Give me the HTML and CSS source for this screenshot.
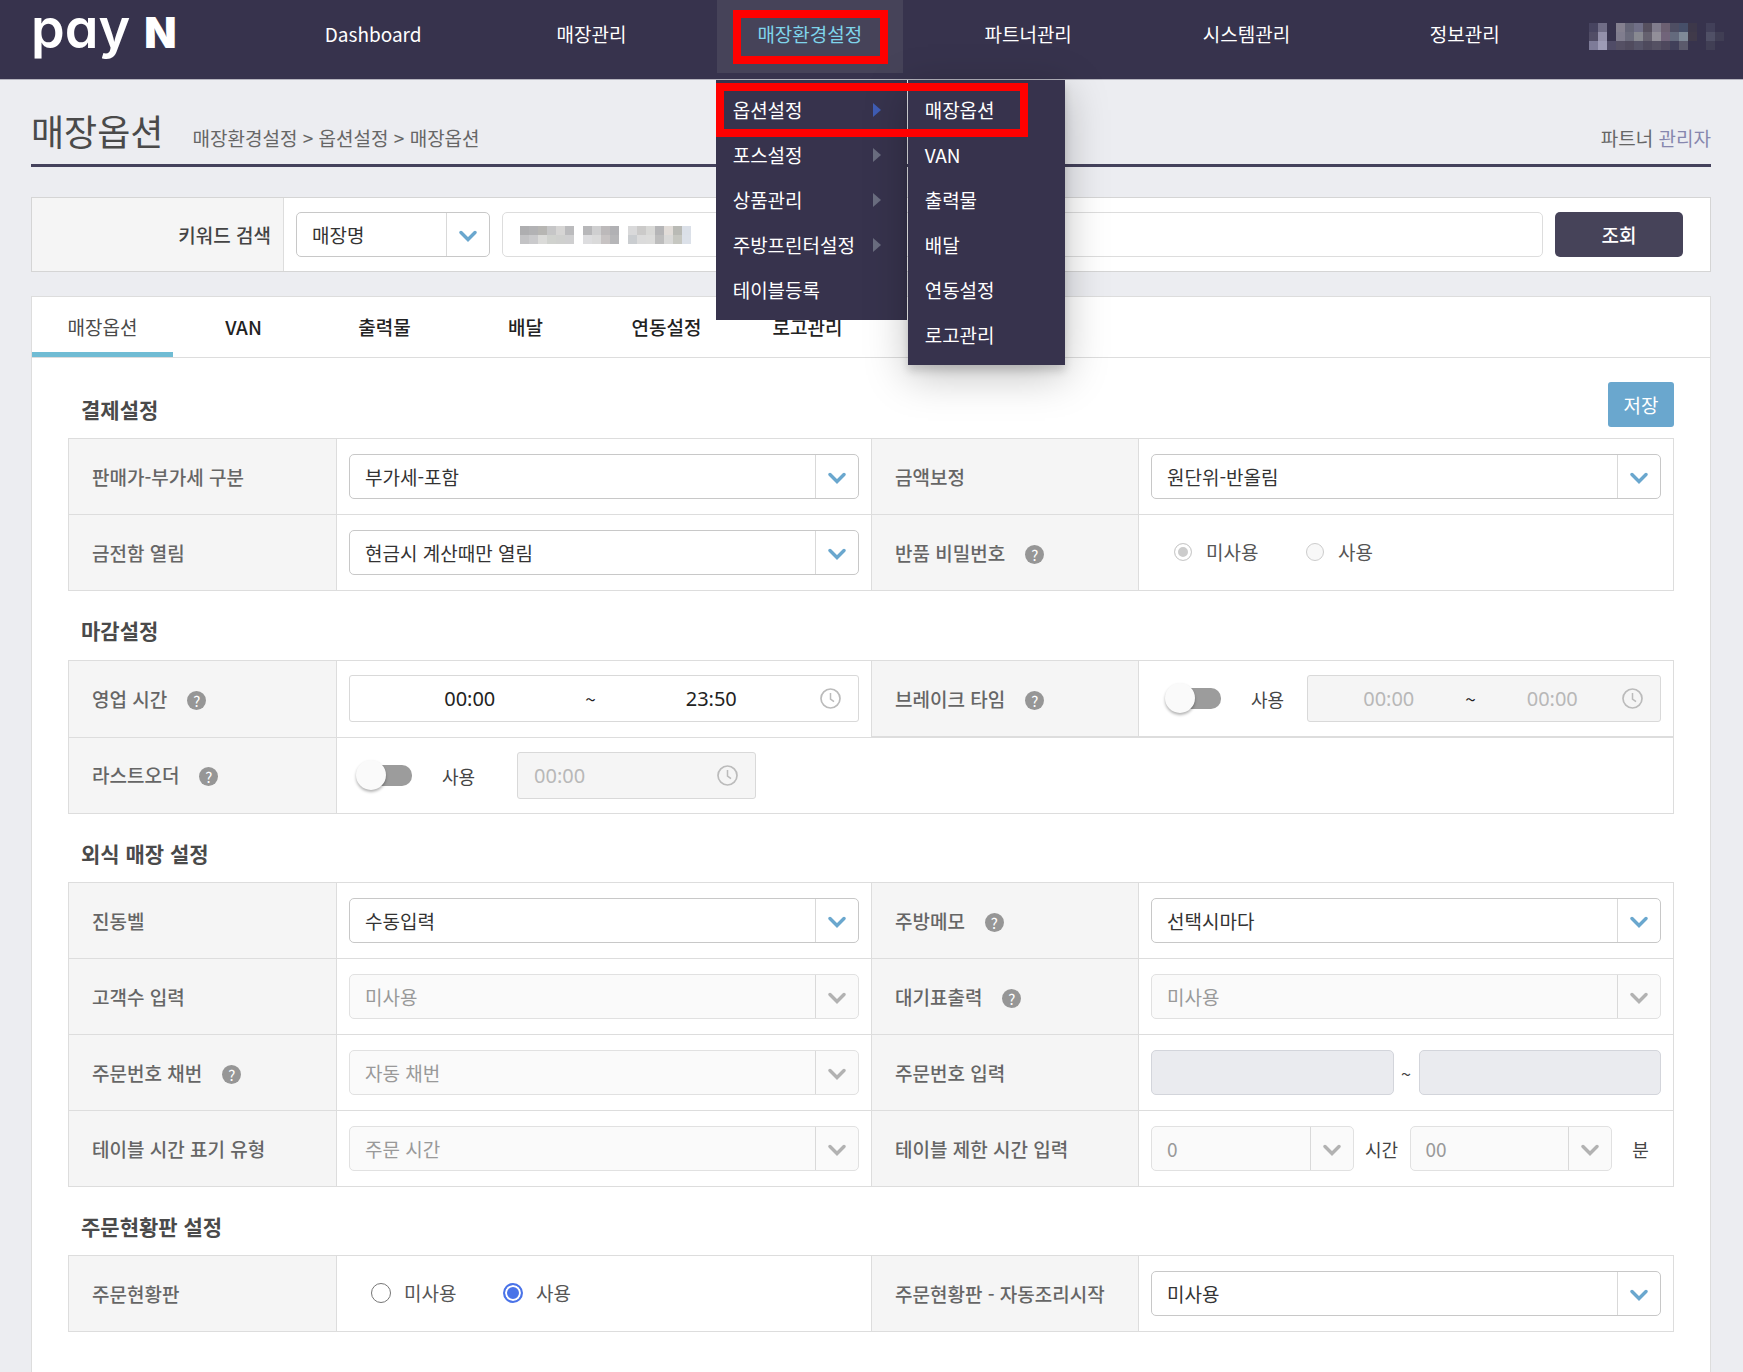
FILE: index.html
```html
<!DOCTYPE html>
<html lang="ko">
<head>
<meta charset="utf-8">
<meta name="viewport" content="width=device-width, initial-scale=1">
<title>매장옵션 - payN</title>
<link rel="stylesheet" href="styles.css">
</head>
<body>
<svg class="sprite" aria-hidden="true">
  <symbol id="chevron" viewBox="0 0 18 12"><path d="M2 2.5 9 9.5 16 2.5" fill="none" stroke="currentColor" stroke-width="3.4" stroke-linecap="round" stroke-linejoin="miter"/></symbol>
  <symbol id="clock" viewBox="0 0 21 21"><circle cx="10.500" cy="10.500" r="9.500" fill="none" stroke="currentColor" stroke-width="1.700"/><path d="M10.500 5v6l3.500 2.600" fill="none" stroke="currentColor" stroke-width="1.500"/></symbol>
</svg>

<header class="topbar">
  <a class="logo" href="#" aria-label="pay N"><span class="logo-pay">pay</span><span class="logo-n">N</span></a>
  <nav class="nav">
    <div class="nav-item"><a class="nav-link" href="#">Dashboard</a></div>
    <div class="nav-item"><a class="nav-link" href="#">매장관리</a></div>
    <div class="nav-item">
      <a class="nav-link active" href="#">매장환경설정</a>
      <span class="mark mark-nav"></span>
      <div class="menus">
        <ul class="menu menu-main">
          <li><a href="#">옵션설정<i class="arrow on"></i></a></li>
          <li><a href="#">포스설정<i class="arrow"></i></a></li>
          <li><a href="#">상품관리<i class="arrow"></i></a></li>
          <li><a href="#">주방프린터설정<i class="arrow"></i></a></li>
          <li><a href="#">테이블등록</a></li>
        </ul>
        <ul class="menu menu-sub">
          <li><a href="#">매장옵션</a></li>
          <li><a href="#">VAN</a></li>
          <li><a href="#">출력물</a></li>
          <li><a href="#">배달</a></li>
          <li><a href="#">연동설정</a></li>
          <li><a href="#">로고관리</a></li>
        </ul>
        <span class="mark mark-menu"></span>
      </div>
    </div>
    <div class="nav-item"><a class="nav-link" href="#">파트너관리</a></div>
    <div class="nav-item"><a class="nav-link" href="#">시스템관리</a></div>
    <div class="nav-item"><a class="nav-link" href="#">정보관리</a></div>
  </nav>
  <div class="user">
    <svg width="135" height="27" viewBox="0 0 15 3" shape-rendering="crispEdges" aria-hidden="true">
      <g><rect x="0" width="1" height="1" fill="#474460"/><rect x="1" width="1" height="1" fill="#706d86"/><rect x="3" width="1" height="1" fill="#84808f"/><rect x="4" width="1" height="1" fill="#656577"/><rect x="5" width="1" height="1" fill="#706f87"/><rect x="6" width="1" height="1" fill="#56505f"/><rect x="7" width="1" height="1" fill="#817d8d"/><rect x="8" width="1" height="1" fill="#6c6072"/><rect x="9" width="1" height="1" fill="#4e4e63"/><rect x="10" width="1" height="1" fill="#464f69"/><rect x="11" width="1" height="1" fill="#3d384a"/><rect x="13" width="1" height="1" fill="#424059"/></g>
      <g><rect x="0" y="1" width="1" height="1" fill="#514d66"/><rect x="1" y="1" width="1" height="1" fill="#9390aa"/><rect x="3" y="1" width="1" height="1" fill="#807d8e"/><rect x="4" y="1" width="1" height="1" fill="#6b6b7c"/><rect x="5" y="1" width="1" height="1" fill="#888991"/><rect x="6" y="1" width="1" height="1" fill="#65616f"/><rect x="7" y="1" width="1" height="1" fill="#928f99"/><rect x="8" y="1" width="1" height="1" fill="#71647a"/><rect x="9" y="1" width="1" height="1" fill="#646a7d"/><rect x="10" y="1" width="1" height="1" fill="#7f8a98"/><rect x="11" y="1" width="1" height="1" fill="#403a4a"/><rect x="13" y="1" width="1" height="1" fill="#505066"/><rect x="14" y="1" width="1" height="1" fill="#403e54"/></g>
      <g><rect x="0" y="2" width="1" height="1" fill="#7d7b98"/><rect x="1" y="2" width="1" height="1" fill="#9d9bb6"/><rect x="2" y="2" width="1" height="1" fill="#504c67"/><rect x="3" y="2" width="1" height="1" fill="#555064"/><rect x="4" y="2" width="1" height="1" fill="#504b5e"/><rect x="5" y="2" width="1" height="1" fill="#565468"/><rect x="6" y="2" width="1" height="1" fill="#4e4a5d"/><rect x="7" y="2" width="1" height="1" fill="#555163"/><rect x="8" y="2" width="1" height="1" fill="#4e485d"/><rect x="9" y="2" width="1" height="1" fill="#41405a"/><rect x="10" y="2" width="1" height="1" fill="#5b5a6c"/><rect x="13" y="2" width="1" height="1" fill="#413f55"/></g>
    </svg>
  </div>
</header>

<main class="page">
  <div class="page-head">
    <h1>매장옵션</h1>
    <p class="crumbs">매장환경설정 &gt; 옵션설정 &gt; 매장옵션</p>
    <p class="role">파트너 <a href="#">관리자</a></p>
  </div>

  <form class="search">
    <label class="search-label" for="keyword-type">키워드 검색</label>
    <div class="search-body">
      <span class="select search-type"><select id="keyword-type"><option>매장명</option></select><svg><use href="#chevron"/></svg></span>
      <span class="keyword">
        <input type="text" aria-label="검색어">
        <svg width="171" height="18" viewBox="0 0 19 2" shape-rendering="crispEdges" aria-hidden="true">
          <g><rect x="0" width="1" height="1" fill="#aeaeb0"/><rect x="1" width="1" height="1" fill="#b2b2b4"/><rect x="2" width="1" height="1" fill="#b7b6b3"/><rect x="3" width="1" height="1" fill="#c6c6c7"/><rect x="4" width="1" height="1" fill="#d6d5d4"/><rect x="5" width="1" height="1" fill="#bbbbbd"/><rect x="7" width="1" height="1" fill="#b7b7b9"/><rect x="8" width="1" height="1" fill="#cfcfd0"/><rect x="9" width="1" height="1" fill="#bcb9ba"/><rect x="10" width="1" height="1" fill="#b1b1b4"/><rect x="12" width="1" height="1" fill="#d9d9da"/><rect x="13" width="1" height="1" fill="#cbcac9"/><rect x="14" width="1" height="1" fill="#d8d8d6"/><rect x="15" width="1" height="1" fill="#b5b5b7"/><rect x="16" width="1" height="1" fill="#e1dcd8"/><rect x="17" width="1" height="1" fill="#b9bab5"/><rect x="18" width="1" height="1" fill="#dbe0e8"/></g>
          <g><rect x="0" y="1" width="1" height="1" fill="#c3c3c5"/><rect x="1" y="1" width="1" height="1" fill="#cacacc"/><rect x="2" y="1" width="1" height="1" fill="#dbdbd9"/><rect x="3" y="1" width="1" height="1" fill="#d0d2ce"/><rect x="4" y="1" width="1" height="1" fill="#cfd0ce"/><rect x="5" y="1" width="1" height="1" fill="#cfcfd0"/><rect x="7" y="1" width="1" height="1" fill="#dddddf"/><rect x="8" y="1" width="1" height="1" fill="#dadada"/><rect x="9" y="1" width="1" height="1" fill="#c7c3c3"/><rect x="10" y="1" width="1" height="1" fill="#b6b6b8"/><rect x="12" y="1" width="1" height="1" fill="#cacdd0"/><rect x="13" y="1" width="1" height="1" fill="#dbdbdb"/><rect x="14" y="1" width="1" height="1" fill="#dcdcdb"/><rect x="15" y="1" width="1" height="1" fill="#bdbdbd"/><rect x="16" y="1" width="1" height="1" fill="#d9d9d8"/><rect x="17" y="1" width="1" height="1" fill="#c6c7c1"/><rect x="18" y="1" width="1" height="1" fill="#dce1e9"/></g>
        </svg>
      </span>
      <button class="btn-search" type="button">조회</button>
    </div>
  </form>

  <section class="panel">
    <div class="tabs">
      <a class="tab current" href="#">매장옵션</a>
      <a class="tab" href="#">VAN</a>
      <a class="tab" href="#">출력물</a>
      <a class="tab" href="#">배달</a>
      <a class="tab" href="#">연동설정</a>
      <a class="tab" href="#">로고관리</a>
    </div>
    <form class="panel-body">
      <div class="section-head first"><h2>결제설정</h2><button class="btn-save" type="button">저장</button></div>
      <table class="grid">
        <colgroup><col class="c-label"><col class="c-field"><col class="c-label2"><col class="c-field"></colgroup>
        <tr>
          <th><label for="vat">판매가-부가세 구분</label></th>
          <td><span class="select"><select id="vat"><option>부가세-포함</option></select><svg><use href="#chevron"/></svg></span></td>
          <th><label for="round">금액보정</label></th>
          <td><span class="select"><select id="round"><option>원단위-반올림</option></select><svg><use href="#chevron"/></svg></span></td>
        </tr>
        <tr>
          <th><label for="drawer">금전함 열림</label></th>
          <td><span class="select"><select id="drawer"><option>현금시 계산때만 열림</option></select><svg><use href="#chevron"/></svg></span></td>
          <th>반품 비밀번호<span class="help">?</span></th>
          <td>
            <div class="radios">
              <label><input type="radio" name="refund" checked disabled>미사용</label>
              <label><input type="radio" name="refund" disabled>사용</label>
            </div>
          </td>
        </tr>
      </table>

      <div class="section-head"><h2>마감설정</h2></div>
      <table class="grid tall">
        <colgroup><col class="c-label"><col class="c-field"><col class="c-label2"><col class="c-field"></colgroup>
        <tr>
          <th><label for="open-from">영업 시간</label><span class="help">?</span></th>
          <td><div class="range"><input id="open-from" type="text" value="00:00"><span>~</span><input type="text" value="23:50" aria-label="영업 종료"><svg><use href="#clock"/></svg></div></td>
          <th class="thick">브레이크 타임<span class="help">?</span></th>
          <td class="thick">
            <div class="row">
              <label class="switch"><input type="checkbox"><i></i>사용</label>
              <div class="range off"><input type="text" value="00:00" aria-label="브레이크 시작" disabled><span>~</span><input type="text" value="00:00" aria-label="브레이크 종료" disabled><svg><use href="#clock"/></svg></div>
            </div>
          </td>
        </tr>
        <tr>
          <th>라스트오더<span class="help">?</span></th>
          <td colspan="3">
            <div class="row">
              <label class="switch wide"><input type="checkbox"><i></i>사용</label>
              <div class="range single off"><input type="text" value="00:00" aria-label="라스트오더 시간" disabled><svg><use href="#clock"/></svg></div>
            </div>
          </td>
        </tr>
      </table>

      <div class="section-head"><h2>외식 매장 설정</h2></div>
      <table class="grid">
        <colgroup><col class="c-label"><col class="c-field"><col class="c-label2"><col class="c-field"></colgroup>
        <tr>
          <th><label for="bell">진동벨</label></th>
          <td><span class="select"><select id="bell"><option>수동입력</option></select><svg><use href="#chevron"/></svg></span></td>
          <th><label for="memo">주방메모</label><span class="help">?</span></th>
          <td><span class="select"><select id="memo"><option>선택시마다</option></select><svg><use href="#chevron"/></svg></span></td>
        </tr>
        <tr>
          <th><label for="guests">고객수 입력</label></th>
          <td><span class="select off"><select id="guests" disabled><option>미사용</option></select><svg><use href="#chevron"/></svg></span></td>
          <th><label for="ticket">대기표출력</label><span class="help">?</span></th>
          <td><span class="select off"><select id="ticket" disabled><option>미사용</option></select><svg><use href="#chevron"/></svg></span></td>
        </tr>
        <tr>
          <th><label for="numbering">주문번호 채번</label><span class="help">?</span></th>
          <td><span class="select off"><select id="numbering" disabled><option>자동 채번</option></select><svg><use href="#chevron"/></svg></span></td>
          <th><label for="no-from">주문번호 입력</label></th>
          <td><div class="row numbers"><input id="no-from" type="text" disabled><span>~</span><input type="text" aria-label="주문번호 끝" disabled></div></td>
        </tr>
        <tr>
          <th><label for="time-type">테이블 시간 표기 유형</label></th>
          <td><span class="select off"><select id="time-type" disabled><option>주문 시간</option></select><svg><use href="#chevron"/></svg></span></td>
          <th><label for="limit-h">테이블 제한 시간 입력</label></th>
          <td>
            <div class="row limits">
              <span class="select off"><select id="limit-h" disabled><option>0</option></select><svg><use href="#chevron"/></svg></span>
              <span class="unit">시간</span>
              <span class="select off"><select aria-label="분" disabled><option>00</option></select><svg><use href="#chevron"/></svg></span>
              <span class="unit last">분</span>
            </div>
          </td>
        </tr>
      </table>

      <div class="section-head"><h2>주문현황판 설정</h2></div>
      <table class="grid">
        <colgroup><col class="c-label"><col class="c-field"><col class="c-label2"><col class="c-field"></colgroup>
        <tr>
          <th>주문현황판</th>
          <td>
            <div class="radios">
              <label><input type="radio" name="board">미사용</label>
              <label><input type="radio" name="board" checked>사용</label>
            </div>
          </td>
          <th><label for="auto">주문현황판 - 자동조리시작</label></th>
          <td><span class="select"><select id="auto"><option>미사용</option></select><svg><use href="#chevron"/></svg></span></td>
        </tr>
      </table>
    </form>
  </section>
</main>
</body>
</html>
```
FILE: styles.css
```css
* { box-sizing: border-box; }

body {
  margin: 0;
  min-height: 100vh;
  display: flex;
  flex-direction: column;
  background: #ecedf1;
  color: #444;
  font: 19px/28px "Noto Sans CJK KR", "Noto Sans CJK JP", sans-serif;
}

a { color: inherit; text-decoration: none; }
h1, h2, p, ul { margin: 0; padding: 0; }
ul { list-style: none; }
input, select, button { font: inherit; color: inherit; margin: 0; min-width: 0; }
.sprite { position: absolute; width: 0; height: 0; }

/* Top bar */
.topbar {
  display: flex;
  height: 80px;
  background: #37334d;
  border-bottom: 1px solid #b5b4be;
  color: #fff;
}
.logo {
  flex: 0 0 264px;
  display: flex;
  align-items: baseline;
  gap: 14px;
  padding-left: 31px;
  font-family: Inter, sans-serif;
  line-height: 58px;
}
.logo-pay { font-size: 54px; font-weight: 600; font-feature-settings: "cv11"; }
.logo-n { font-size: 42px; font-weight: 900; }
.nav { flex: 1; display: grid; grid-template-columns: repeat(6, 1fr); }
.nav-item { position: relative; padding: 0 16px; }
.nav-link { display: block; height: 73px; line-height: 68px; text-align: center; }
.nav-link.active { background: #464359; color: #7fd4ea; }
.user { flex: 0 0 169px; padding: 23px 0 0 15px; }
.user svg { display: block; }

.mark { position: absolute; border: 8px solid #f00; pointer-events: none; }
.mark-nav { left: 32px; right: 31px; top: 10px; height: 54px; }
.mark-menu { left: 0; top: 3px; width: 312px; height: 54px; }

.menus {
  position: absolute;
  top: 80px;
  left: 15px;
  z-index: 5;
  display: flex;
  align-items: flex-start;
  gap: 1px;
  width: 349px;
}
.menu { background: #37334d; padding: 7px 0 8px; }
.menu-main { flex: 0 0 191px; }
.menu-sub { flex: 1; box-shadow: 0 6px 8px rgba(0, 0, 0, .15), 0 10px 40px rgba(0, 0, 0, .25); }
.menu a {
  display: flex;
  align-items: center;
  justify-content: space-between;
  height: 45px;
  padding: 0 26px 0 17px;
}
.arrow {
  border-left: 8px solid #6b6e80;
  border-top: 7px solid transparent;
  border-bottom: 7px solid transparent;
}
.arrow.on { border-left-color: #3f5db4; }

/* Page head */
.page { flex: 1; display: flex; flex-direction: column; padding: 0 32px 0 31px; }
.page-head {
  display: flex;
  align-items: baseline;
  height: 87px;
  padding-top: 25px;
  border-bottom: 3px solid #44425c;
  color: #666;
}
h1 { font-size: 36px; line-height: 50px; font-weight: 400; color: #4a4a4a; margin-right: 29px; }
.role { margin-left: auto; }
.role a { color: #8787ae; }

/* Search */
.search { display: flex; margin-top: 30px; border: 1px solid #d5d5d5; background: #fff; }
.search-label {
  flex: 0 0 252px;
  display: flex;
  align-items: center;
  justify-content: flex-end;
  padding-right: 12px;
  background: #f5f5f5;
  border-right: 1px solid #ddd;
  font-weight: 500;
}
.search-body { flex: 1; display: flex; gap: 12px; padding: 14px 27px 14px 12px; }
.search-type { flex: 0 0 194px; }
.keyword { flex: 1; position: relative; display: flex; }
.keyword input { width: 100%; height: 45px; border: 1px solid #ddd; border-radius: 5px; padding: 0 15px; background: #fff; }
.keyword svg { position: absolute; left: 18px; top: 14px; }
button { border: 0; color: #fff; cursor: pointer; height: 45px; padding: 0; }
.btn-search { flex: 0 0 128px; background: #464359; border-radius: 5px; font-weight: 500; }
.btn-save { width: 66px; background: #6aa7ce; border-radius: 3px; }

/* Selects */
.select { position: relative; display: block; height: 45px; color: #333; }
.select select {
  appearance: none;
  display: block;
  width: 100%;
  height: 45px;
  padding: 0 56px 0 15px;
  border: 1px solid #c8c8c8;
  border-radius: 5px;
  background: #fff;
  opacity: 1;
}
.select::after {
  content: "";
  position: absolute;
  right: 43px;
  top: 1px;
  bottom: 1px;
  border-left: 1px solid #d9d9d9;
}
.select svg { position: absolute; right: 13px; top: 18px; width: 18px; height: 12px; color: #6aa7ce; pointer-events: none; }
.select.off { color: #999; }
.select.off select { background: #fafafa; border-color: #e1e1e1; }
.select.off svg { color: #b2b2b2; }

/* Panel and tabs */
.panel { flex: 1; margin-top: 24px; border: 1px solid #ddd; border-bottom: 0; background: #fff; }
.tabs { display: flex; border-bottom: 1px solid #ddd; color: #222; font-weight: 500; }
.tab { flex: 0 0 141px; height: 60px; line-height: 60px; text-align: center; }
.tab.current { border-bottom: 5px solid #70bcd4; color: #4a4a4a; font-weight: 400; }
.panel-body { padding: 0 36px 40px; }

.section-head { display: flex; height: 68px; padding: 25px 0 0 13px; }
.section-head.first { height: 80px; padding-top: 24px; justify-content: space-between; }
.section-head.first h2 { padding-top: 13px; }
h2 { font-size: 21px; line-height: 28px; font-weight: 700; color: #4a4a4a; }

/* Form tables */
.grid { width: 100%; table-layout: fixed; border-collapse: collapse; }
.grid.tall { margin-top: 1px; }
.c-label { width: 268px; }
.c-label2 { width: 267px; }
.grid th, .grid td { border: 1px solid #ddd; padding: 15px 12px; height: 75px; vertical-align: middle; }
.grid th { padding: 0 0 0 23px; background: #f5f5f5; color: #666; font-weight: 500; text-align: left; white-space: nowrap; }
.grid.tall td { padding: 14px 12px; }
.grid .thick { border-bottom-width: 2px; }

.help {
  display: inline-block;
  width: 19px;
  height: 19px;
  margin-left: 20px;
  border-radius: 50%;
  background: #969696;
  color: #fff;
  font-size: 15px;
  font-weight: 400;
  line-height: 19px;
  text-align: center;
}

.radios { display: flex; padding: 0 0 2px 22px; color: #555; }
.radios label { display: flex; align-items: center; gap: 13px; width: 132px; }
.radios input {
  appearance: none;
  width: 20px;
  height: 20px;
  border: 1px solid #767676;
  border-radius: 50%;
  background: #fff;
}
.radios input:checked { border: 2px solid #4a73e8; box-shadow: inset 0 0 0 2px #fff; background: #4a73e8; }
.radios input:disabled { width: 18px; height: 18px; margin: 1px; border: 1px solid #ccc; background: #f8f8f8; }
.radios input:disabled:checked { box-shadow: inset 0 0 0 3px #fff; background: #ccc; }

.row { display: flex; align-items: center; }

/* Time fields */
.range {
  flex: 1;
  display: flex;
  align-items: center;
  height: 47px;
  padding: 0 17px 0 11px;
  border: 1px solid #d9d9d9;
  border-radius: 3px;
  background: #fff;
  color: #222;
}
.range input {
  flex: 1;
  width: 0;
  height: 30px;
  padding: 0;
  border: 0;
  background: none;
  text-align: center;
  font-family: "Noto Sans", sans-serif;
  font-size: 20px;
}
.range span { width: 24px; text-align: center; }
.range svg { width: 21px; height: 21px; color: #bbb; }
.range.off { background: #f5f5f5; }
.range.off input { color: #b8b8b8; }
.range.single { flex: 0 0 239px; padding-left: 16px; }
.range.single input { text-align: left; }

.switch { display: flex; align-items: center; width: 156px; padding-left: 27px; font-size: 18px; }
.switch.wide { width: 168px; padding-left: 20px; }
.switch input { position: absolute; opacity: 0; }
.switch i { position: relative; width: 43px; height: 21px; margin-right: 30px; border-radius: 10px; background: #9c9c9c; }
.switch i::before {
  content: "";
  position: absolute;
  left: -13px;
  top: -5px;
  width: 30px;
  height: 30px;
  border-radius: 50%;
  background: #fafafa;
  box-shadow: 0 2px 3px rgba(0, 0, 0, .3);
}

.numbers input { flex: 1; height: 45px; border: 1px solid #d3d5db; border-radius: 5px; background: #eaebef; }
.numbers span { width: 25px; text-align: center; font-size: 18px; }
.limits .select { flex: 1; }
.unit { width: 56px; text-align: center; font-size: 18px; }
.unit.last { padding-left: 8px; width: 49px; }
```
